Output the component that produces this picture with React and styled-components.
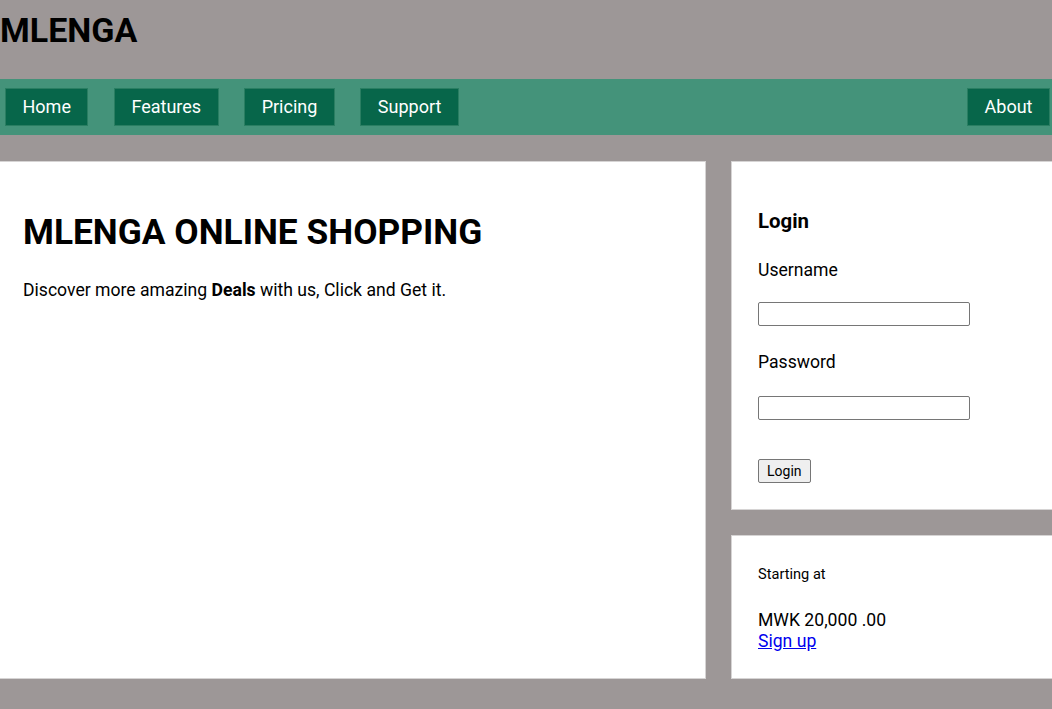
import React from 'react'
import styled, { createGlobalStyle } from 'styled-components'

const GlobalStyle = createGlobalStyle`
  body {
    margin: 0;
    background: #9d9797;
    font-family: Roboto, "Liberation Sans", sans-serif;
    color: #000;
  }
`

const Page = styled.div`
  min-height: 709px;
  background: #9d9797;
  padding-bottom: 31px;
`

const Header = styled.header`
  height: 79px;
  box-sizing: border-box;
  padding-top: 9px;
`

const Logo = styled.h1`
  margin: 0;
  font-size: 34px;
  line-height: 42px;
  font-weight: 700;
`

const Nav = styled.nav`
  display: flex;
  align-items: center;
  height: 56px;
  box-sizing: border-box;
  padding: 0 2px 0 5px;
  background: #44937a;
  gap: 25.5px;
`

const NavButton = styled.a`
  display: block;
  padding: 8px 16.5px;
  line-height: 20px;
  font-size: 18px;
  color: #fff;
  background: #07664a;
  border: 1px solid #2a7e62;
  text-decoration: none;
  margin-left: ${props => (props.$push ? 'auto' : '0')};
`

const Content = styled.main`
  display: grid;
  grid-template-columns: 705px 1fr;
  column-gap: 27px;
  margin-top: 27px;
`

const Panel = styled.section`
  background: #fff;
  box-shadow: 0 0 0 1px #d6d4d4;
  padding: 0 ${props => props.$pad || 26}px 26px;
`

const Side = styled.div`
  display: flex;
  flex-direction: column;
  gap: 27px;
`

const Title = styled.h2`
  margin: 50px 0 0;
  font-size: 35.3px;
  line-height: 40px;
  font-weight: 700;
`

const Lead = styled.p`
  margin: 27px 0 0;
  font-size: 17.6px;
  line-height: 22px;
`

const CardTitle = styled.h3`
  margin: 47px 0 0;
  font-size: 20.4px;
  line-height: 24px;
  font-weight: 700;
`

const Label = styled.label`
  display: block;
  font-size: 17.6px;
  line-height: 22px;
  margin-top: ${props => props.$top}px;
`

const Input = styled.input`
  display: block;
  width: 212px;
  height: 24px;
  box-sizing: border-box;
  margin-top: ${props => props.$top}px;
  border: 1px solid #767676;
  border-radius: 2px;
  padding: 1px 2px;
  background: #fff;
`

const Button = styled.button`
  display: block;
  margin-top: 39px;
  height: 24px;
  padding: 1px 8px;
  font-family: Roboto, "Liberation Sans", sans-serif;
  font-size: 14px;
  background: #efefef;
  border: 1px solid #767676;
  border-radius: 2px;
  color: #000;
`

const Small = styled.p`
  margin: 29px 0 0;
  font-size: 14.6px;
  line-height: 18px;
`

const Price = styled.p`
  margin: 27px 0 0;
  font-size: 17.6px;
  line-height: 21px;
`

const SignUp = styled.a`
  display: block;
  font-size: 17.6px;
  line-height: 21px;
  color: #0000ee;
  text-decoration: underline;
`

function App() {
  return (
    <Page>
      <GlobalStyle />
      <Header>
        <Logo>MLENGA</Logo>
      </Header>
      <Nav>
        <NavButton href="#">Home</NavButton>
        <NavButton href="#">Features</NavButton>
        <NavButton href="#">Pricing</NavButton>
        <NavButton href="#">Support</NavButton>
        <NavButton href="#" $push>About</NavButton>
      </Nav>
      <Content>
        <Panel $pad={23}>
          <Title>MLENGA ONLINE SHOPPING</Title>
          <Lead>
            Discover more amazing <b>Deals</b> with us, Click and Get it.
          </Lead>
        </Panel>
        <Side>
          <Panel>
            <CardTitle>Login</CardTitle>
            <Label $top={26}>Username</Label>
            <Input type="text" $top={21} />
            <Label $top={25}>Password</Label>
            <Input type="password" $top={23} />
            <Button>Login</Button>
          </Panel>
          <Panel>
            <Small>Starting at</Small>
            <Price>MWK 20,000 .00</Price>
            <SignUp href="#">Sign up</SignUp>
          </Panel>
        </Side>
      </Content>
    </Page>
  )
}

export default App
